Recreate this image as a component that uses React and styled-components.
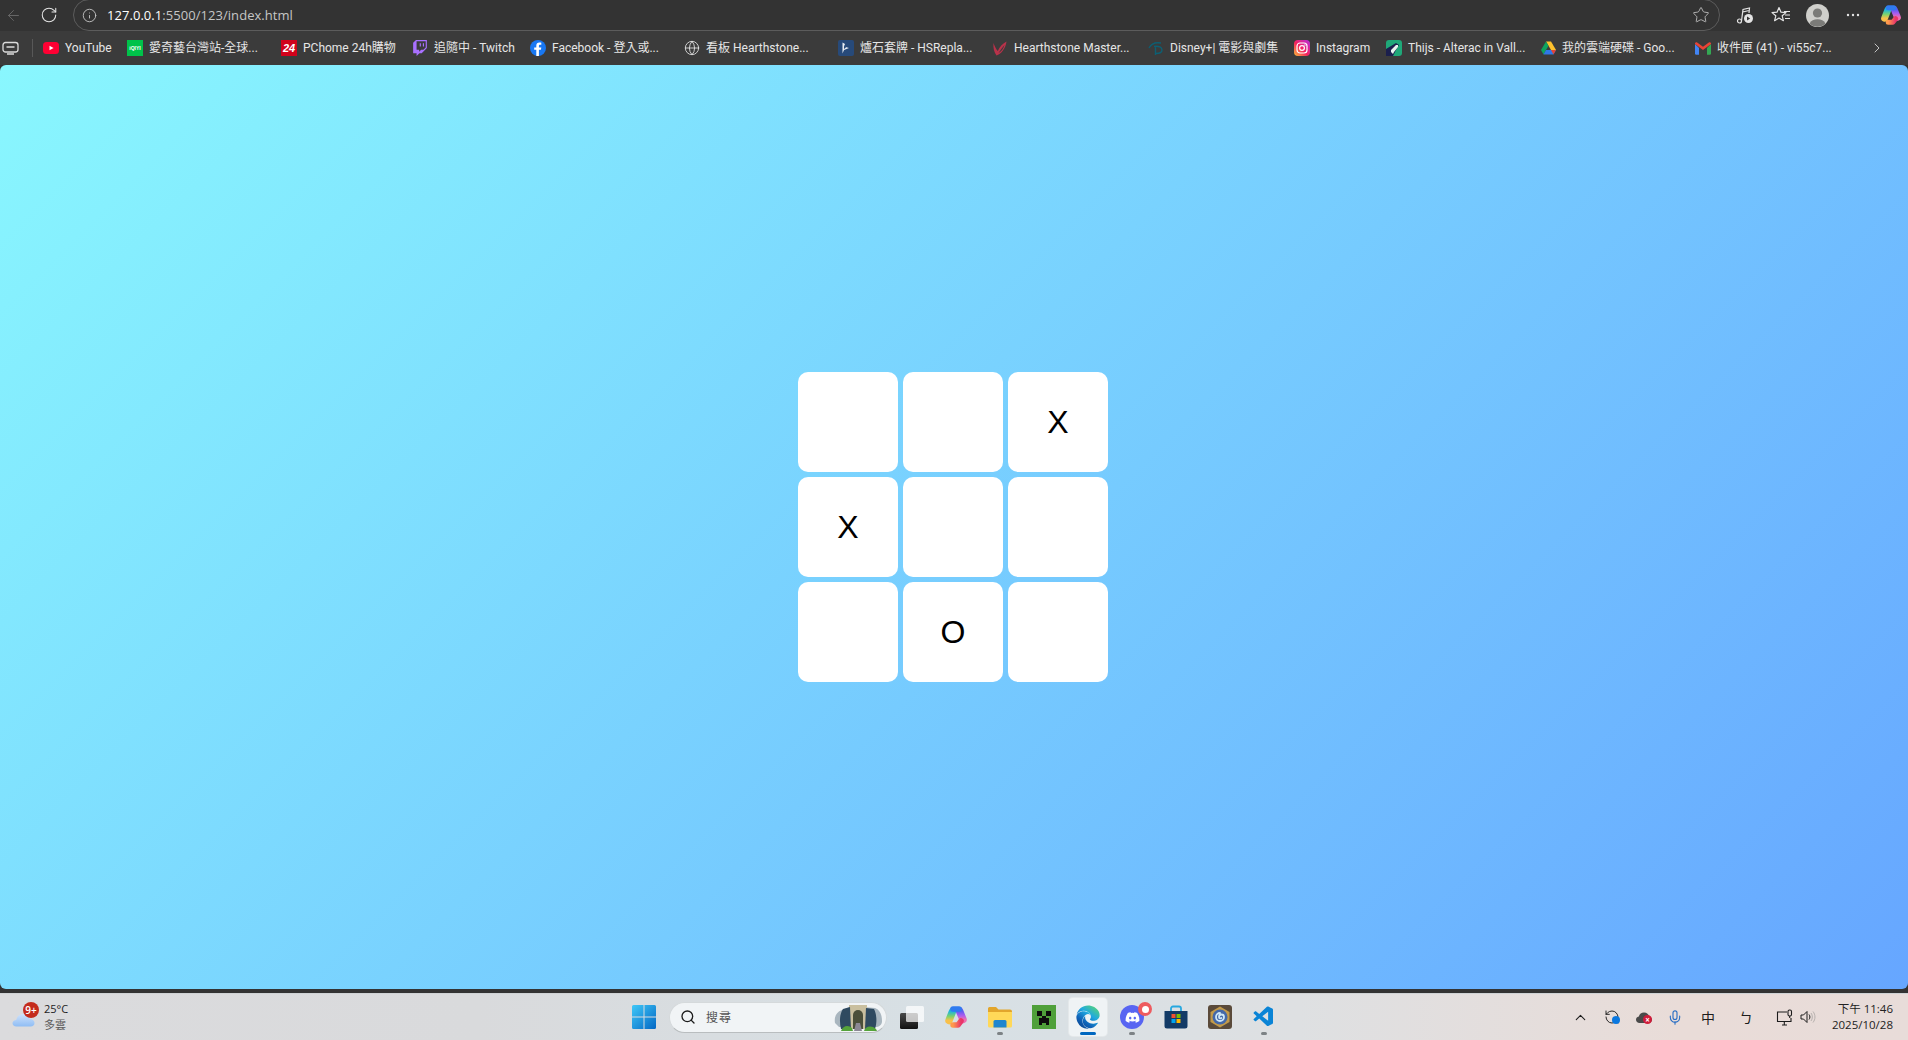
import React from "react";
import styled, { createGlobalStyle } from "styled-components";
import { ArrowLeft, RotateCw, Info, Star, ChevronRight, ChevronUp, Globe, Mic, RefreshCcw, Search } from "lucide-react";
import { FaDiscord, FaEdge } from "react-icons/fa";
import { SiTwitch } from "react-icons/si";
import { VscVscode } from "react-icons/vsc";

const UI = `"Open Sans", "Noto Sans", "Noto Sans CJK TC", sans-serif`;

const Global = createGlobalStyle`
  html, body { margin: 0; padding: 0; height: 100%; overflow: hidden; background: #333; }
  #root { height: 100%; }
  * { box-sizing: border-box; }
`;

const Shell = styled.div`
  width: 1908px; height: 1040px; display: flex; flex-direction: column;
  background: #333; font-family: ${UI}; overflow: hidden;
`;
const TopRow = styled.div`
  height: 31px; flex: none; display: flex; align-items: flex-start; background: #333;
`;
const Slot = styled.div`
  flex: none; display: flex; align-items: center; justify-content: center;
  width: ${p => p.$w || 36}px; height: 30px; color: ${p => p.$c || "#e4e4e4"};
  margin-left: ${p => p.$ml || 0}px;
`;
const UrlField = styled.div`
  flex: none; width: 1647px; height: 32px; margin: -1px 0 0 1px; display: flex; align-items: center;
  border: 1px solid #5c5c5c; border-radius: 16px;
`;
const UrlText = styled.div`
  flex: 1; margin-left: 3px; font-size: 13px; letter-spacing: 0.05px; color: #c6c6c6; white-space: nowrap;
  b { font-weight: 400; color: #fff; }
`;
const BookRow = styled.div`
  height: 34px; flex: none; display: flex; align-items: center; background: #3b3b3b;
`;
const PillSlot = styled.div`
  flex: none; width: 22px; margin-right: 10px; display: flex; justify-content: flex-end; padding-right: 3px;
`;
const Divider = styled.div`
  flex: none; width: 1px; height: 18px; background: #585858; margin-right: 10px;
`;
const Bookmark = styled.div`
  flex: none; width: ${p => p.$w}px; display: flex; align-items: center; gap: 6px;
  font-family: Roboto, "Noto Sans CJK TC", sans-serif; font-size: 12px; line-height: 16px; color: #e6e6e6; white-space: nowrap; overflow: hidden;
  svg { flex: none; }
`;
const BookChevron = styled.div`
  flex: none; color: #cfcfcf; display: flex;
`;
const Main = styled.main`
  flex: 1; display: flex; align-items: center; justify-content: center; padding-right: 2px;
  background: linear-gradient(135deg, #89f7fe 0%, #66a6ff 100%);
  border-radius: 6px;
`;
const Board = styled.div`
  display: grid; grid-template-columns: repeat(3, 100px); grid-template-rows: repeat(3, 100px); gap: 5px;
`;
const Cell = styled.div`
  background: #fff; border-radius: 10px; display: flex; align-items: center; justify-content: center;
  font-family: "Liberation Sans", Arial, sans-serif; font-size: 32px; color: #000;
`;
const BottomStrip = styled.div`
  height: 4px; flex: none; background: #333;
`;
const Taskbar = styled.footer`
  height: 47px; flex: none; display: grid; grid-template-columns: 622px auto 1fr; align-items: center;
  background: linear-gradient(90deg, #dbdbdd 0%, #d9dadc 25%, #d7e0e5 50%, #dee0e2 68%, #e9dcd8 88%, #e8dcd9 100%);
  border-top: 1px solid #cfd2d4;
`;
const Weather = styled.div`
  display: flex; align-items: center; gap: 9px; padding-left: 12px; height: 100%;
`;
const WeatherIcon = styled.div`
  position: relative; width: 23px; height: 16px; margin-top: 2px;
`;
const Badge = styled.span`
  position: absolute; left: 11px; top: -8px; width: 16px; height: 16px; border-radius: 50%;
  background: #c42b1c; color: #fff; font-size: 10px; line-height: 16px; text-align: center; font-weight: 600;
`;
const WeatherText = styled.div`
  font-size: 11px; line-height: 16px; color: #1d1d1d;
  span { display: block; color: #5a5a5a; }
`;
const Center = styled.div`
  display: flex; align-items: center;
`;
const TaskSlot = styled.div`
  position: relative; flex: none; width: 44px; height: 38px; display: flex; align-items: center; justify-content: center;
  border-radius: 4px;
  ${p => p.$active && `
    &::before { content: ""; position: absolute; left: 3px; right: 3px; top: 0; bottom: 0; border-radius: 4px; background: #eff3f5; box-shadow: 0 0 0 1px #e4e8ea; }
    &::after { content: ""; position: absolute; left: 14px; width: 16px; bottom: 1px; height: 3px; border-radius: 2px; background: #0067c0; }
  `}
  ${p => p.$running && `
    &::after { content: ""; position: absolute; left: 19px; width: 6px; bottom: 1px; height: 3px; border-radius: 2px; background: #7d8285; }
  `}
  svg { position: relative; }
`;
const DiscordDisc = styled.div`
  width: 24px; height: 24px; border-radius: 50%; background: #5865f2; display: flex; align-items: center; justify-content: center; color: #fff;
`;
const NotifyDot = styled.span`
  position: absolute; left: 28px; top: 4px; width: 14px; height: 14px; border-radius: 50%;
  background: #ee5b5f; padding: 3.5px;
  &::after { content: ""; display: block; width: 7px; height: 7px; border-radius: 50%; background: #fff; }
`;
const SearchBox = styled.div`
  flex: none; width: 218px; height: 31px; margin: 0 3px; border-radius: 16px; display: flex; align-items: center;
  background: #f1f4f6; border: 1px solid #d5d9db; border-bottom-color: #b9bdbf; padding-left: 10px; color: #1c1c1c;
`;
const SearchLabel = styled.span`
  font-size: 12px; color: #555; margin-left: 10px; flex: 1; letter-spacing: 1px;
`;
const Tray = styled.div`
  display: flex; align-items: center; color: #1c1c1c; height: 100%; width: 100%;
`;
const TraySlot = styled.div`
  position: relative; flex: none; width: ${p => p.$w}px; margin-left: ${p => p.$ml || 0}px; display: flex; align-items: center; justify-content: center;
  font-size: 14px;
  color: ${p => p.$c || "#1c1c1c"};
`;
const TrayDot = styled.span`
  position: absolute; left: ${p => p.$l}px; top: ${p => p.$t}px; width: ${p => p.$s}px; height: ${p => p.$s}px; border-radius: 50%;
  background: ${p => p.$c}; color: #fff; font-size: 8px; line-height: ${p => p.$s}px; text-align: center; font-weight: 700;
`;
const Clock = styled.div`
  margin-left: auto; padding-right: 15px; text-align: right; font-size: 11.5px; line-height: 16px; color: #222; white-space: nowrap;
`;
const EdgeWrap = styled.div`
  position: relative; display: flex; color: #1f8fd8;
  svg path { fill: url(#edgeGrad); }
`;
const HiddenDefs = styled.svg`
  position: absolute; width: 0; height: 0;
`;
const BingSvg = styled.svg`
  margin-right: 3px; flex: none;
`;

/* ---------- drawn icons ---------- */
const TabPill = () => (
  <svg width="17" height="14" viewBox="0 0 17 14" fill="none" stroke="#dcdcdc" strokeWidth="1.3">
    <rect x="1" y="1.5" width="15" height="9.5" rx="2.5" />
    <path d="M4.5 6h8M5 13h7" />
  </svg>
);
const YT = () => (
  <svg width="16" height="16" viewBox="0 0 16 16"><rect y="2" width="16" height="12" rx="3.5" fill="#ff0033" /><path d="M6.5 5.8 10.6 8l-4.1 2.2z" fill="#fff" /></svg>
);
const IQ = () => (
  <svg width="16" height="16" viewBox="0 0 16 16"><rect width="16" height="16" fill="#00c24a" /><text x="8" y="10" fontSize="5" fontWeight="700" textAnchor="middle" fill="#fff" fontFamily="Liberation Sans">iQIYI</text></svg>
);
const PC = () => (
  <svg width="16" height="16" viewBox="0 0 16 16"><rect width="16" height="16" fill="#d0021b" /><text x="8" y="12" fontSize="11" fontWeight="700" fontStyle="italic" textAnchor="middle" fill="#fff" fontFamily="Liberation Sans">24</text></svg>
);
const Twitch = () => <SiTwitch size={16} color="#a970ff" />;
const FB = () => (
  <svg width="16" height="16" viewBox="0 0 16 16"><circle cx="8" cy="8" r="8" fill="#1877f2" /><path d="M8.9 16V9.8h2l.4-2.4H8.9V6c0-.7.3-1.2 1.3-1.2h1.1V2.7c-.5-.1-1.2-.2-1.9-.2-1.9 0-3.1 1.1-3.1 3.2v1.7H4.2v2.4h2.1V16z" fill="#fff" /></svg>
);
const HS = () => (
  <svg width="16" height="16" viewBox="0 0 16 16"><rect width="16" height="16" rx="2" fill="#274a7a" /><path d="M4.5 2.5v11l1.5-3.5 5-2L6 6.5 7 4z" fill="#e8edf3" /><path d="M6 5.5 8 7.5 6 9z" fill="#274a7a" /></svg>
);
const HM = () => (
  <svg width="16" height="16" viewBox="0 0 16 16"><path d="M1.500 3c-.5 5 .5 9 3 12.500 4.500-1.500 9-6.500 10-14C11 3.500 7.500 6.500 5.800 11 4 9 2.800 6.500 1.500 3z" fill="#b8324a" /><path d="M6.500 13C8.500 10 10.500 7.500 12.500 5 11.500 8.500 9.500 11.500 6.500 13z" fill="#3b3b3b" /></svg>
);
const Disney = () => (
  <svg width="16" height="16" viewBox="0 0 16 16" fill="none" stroke="#0d5f73" strokeWidth="1.4"><path d="M1 8c2-4 6-6 12-5" /><path d="M6 6.5c5-1 8 1 8 3.500s-3 3.500-6 3.500M7.500 7v8" /></svg>
);
const IG = () => (
  <svg width="16" height="16" viewBox="0 0 16 16" fill="none">
    <defs><linearGradient id="ig" x1="0" y1="1" x2="1" y2="0"><stop offset="0" stopColor="#fdc13a" /><stop offset=".45" stopColor="#f5225c" /><stop offset="1" stopColor="#b62ee0" /></linearGradient></defs>
    <rect width="16" height="16" rx="4" fill="url(#ig)" />
    <rect x="3" y="3" width="10" height="10" rx="3" stroke="#fff" strokeWidth="1.2" />
    <circle cx="8" cy="8" r="2.4" stroke="#fff" strokeWidth="1.2" /><circle cx="11" cy="5" r=".7" fill="#fff" />
  </svg>
);
const Thijs = () => (
  <svg width="16" height="16" viewBox="0 0 16 16"><rect width="16" height="16" rx="3" fill="#1fa879" /><path d="M0 16V9l5-3 5-3 3 2-3 5-3 6z" fill="#1b1f4d" /><path d="M5 10l5-5h2v2l-4 5-1 2-2-2z" fill="#e8f4ef" /></svg>
);
const Drive = () => (
  <svg width="15" height="14" viewBox="0 0 15 14"><path d="M5 .5h5l5 8.500h-5z" fill="#fdc12d" /><path d="M5 .5 7.500 4.800 2.500 13.500 0 9z" fill="#0fa35e" /><path d="M5 9h10l-2.500 4.500h-10z" fill="#2f78e8" /><path d="M10 9h5l-2.500 4.500z" fill="#e64435" /></svg>
);
const Gmail = () => (
  <svg width="16" height="13" viewBox="0 0 16 13"><path d="M0 2v9.500A1.200 1.200 0 0 0 1.200 12.700H4V6z" fill="#4285f4" /><path d="M12 6v6.700h2.800A1.200 1.200 0 0 0 16 11.500V2z" fill="#34a853" /><path d="M0 2 8 8l8-6V1.600C16 .4 14.700-.2 13.800.4L8 4.800 2.200.4C1.300-.2 0 .4 0 1.600z" fill="#ea4335" /></svg>
);
const Copilot = ({ size = 22, id = "c" }) => (
  <svg width={size} height={size} viewBox="0 0 24 24" fill="none" strokeLinecap="round" strokeWidth="7.5">
    <defs>
      <linearGradient id={`${id}a`} x1="0" y1="0" x2="0" y2="1"><stop offset="0" stopColor="#1fb5d8" /><stop offset=".55" stopColor="#7fd36a" /><stop offset="1" stopColor="#f8c04a" /></linearGradient>
      <linearGradient id={`${id}b`} x1="0" y1="0" x2="0" y2="1"><stop offset="0" stopColor="#5a5cf0" /><stop offset=".5" stopColor="#a85cf0" /><stop offset="1" stopColor="#ee6fb0" /></linearGradient>
      <linearGradient id={`${id}c`} x1="0" y1="0" x2="1" y2="0"><stop offset="0" stopColor="#ff9a4c" /><stop offset="1" stopColor="#e8356a" /></linearGradient>
    </defs>
    <path d="M8.500 6.500 5 15.500" stroke={`url(#${id}a)`} />
    <path d="M15.500 6 19 14.500" stroke={`url(#${id}b)`} />
    <path d="M9 4h6" stroke="#2f7bf0" strokeWidth="5.500" />
    <path d="M9 20h5l3-4" stroke={`url(#${id}c)`} strokeWidth="5.500" strokeLinejoin="round" />
  </svg>
);
const MusicQueue = () => (
  <svg width="18" height="18" viewBox="0 0 18 18" fill="none" stroke="#e4e4e4" strokeWidth="1.2">
    <circle cx="3.500" cy="15" r="2" /><path d="M5.500 15 7 3.500 13.500 2 13 7M6.800 6l6.200-1.500" />
    <circle cx="12.500" cy="12.500" r="4.500" fill="#e4e4e4" stroke="none" /><path d="M11 10.500v4l3.200-2z" fill="#333" stroke="none" />
  </svg>
);
const FavList = () => (
  <svg width="20" height="18" viewBox="0 0 20 18" fill="none" stroke="#e4e4e4" strokeWidth="1.2" strokeLinejoin="round">
    <path d="M8 1.500 10 6.200l5 .4-3.800 3.200 1.200 4.900L8 12.100l-4.400 2.600 1.200-4.900L1 6.600l5-.4z" />
    <path d="M13 5.500h6M14 9h5M14 12.500h5" />
  </svg>
);
const Avatar = () => (
  <svg width="23" height="23" viewBox="0 0 23 23"><circle cx="11.500" cy="11.500" r="11.500" fill="#cfcfcb" /><circle cx="11.500" cy="9" r="4.600" fill="#7b7b78" /><path d="M3.500 19.500c1.500-3 4.500-4.200 8-4.200s6.500 1.200 8 4.200a11.500 11.500 0 0 1-16 0z" fill="#7b7b78" /></svg>
);
const Dots = () => (
  <svg width="14" height="4" viewBox="0 0 14 4" fill="#e4e4e4"><circle cx="2" cy="2" r="1.200" /><circle cx="7" cy="2" r="1.200" /><circle cx="12" cy="2" r="1.200" /></svg>
);
const CloudIcon = () => (
  <svg width="23" height="16" viewBox="0 0 23 16"><defs><linearGradient id="cl" x1="0" y1="0" x2="0" y2="1"><stop offset="0" stopColor="#cfe2fb" /><stop offset="1" stopColor="#8fbdf4" /></linearGradient></defs><path d="M4.500 15.500C2 15.500.5 14 .5 12.300c0-2 1.700-3.300 3.700-3.300C5 5 8 3 11 3c3.500 0 6 2 6.700 5 2.500 0 4.800 1.600 4.800 4 0 2-1.500 3.500-3.800 3.500z" fill="url(#cl)" /></svg>
);
const WinLogo = () => (
  <svg width="24" height="24" viewBox="0 0 24 24"><defs><linearGradient id="w" x1="0" y1="0" x2="1" y2="1"><stop offset="0" stopColor="#3fc8f8" /><stop offset="1" stopColor="#0367c4" /></linearGradient></defs><path d="M0 1.500A1.500 1.500 0 0 1 1.500 0h10v11.500H0zM12.500 0h10A1.500 1.500 0 0 1 24 1.500v10H12.500zM0 12.500h11.500V24h-10A1.500 1.500 0 0 1 0 22.500zM12.500 12.500H24v10a1.500 1.500 0 0 1-1.500 1.500h-10z" fill="url(#w)" /></svg>
);
const BingPic = () => (
  <BingSvg width="50" height="28" viewBox="0 0 50 28">
    <path d="M2 20C1 14 3 9 9 7l8-3 3 20H6z" fill="#a9b6bf" />
    <path d="M30 4l12 1c5 2 7 7 7 13 0 4-3 6-7 6H30z" fill="#a9b6bf" />
    <rect x="16" y="2" width="18" height="24" fill="#c9bf9f" />
    <path d="M20 26V12a5 5 0 0 1 10 0v14z" fill="#4b4f3a" />
    <path d="M10 6l7-2 1 22H8C6 18 7 10 10 6z" fill="#2f4a60" />
    <path d="M33 5l8 1c3 6 3 14 1 20H32z" fill="#2f4a60" />
    <path d="M8 28c2-6 8-6 11-3l1 3zM31 28c1-5 8-6 12-2l1 2z" fill="#55a33a" />
    <path d="M21 28l2-8h4l2 8z" fill="#8b8794" />
  </BingSvg>
);
const TaskView = () => (
  <svg width="24" height="23" viewBox="0 0 24 23"><defs><linearGradient id="tv" x1="0" y1="0" x2="0" y2="1"><stop offset="0" stopColor="#4a4a4a" /><stop offset="1" stopColor="#111" /></linearGradient></defs><rect x="0" y="7" width="18" height="16" rx="1.500" fill="url(#tv)" /><rect x="6" y="0" width="18" height="16" rx="1.500" fill="#fff" fillOpacity=".72" /></svg>
);
const Folder = () => (
  <svg width="24" height="24" viewBox="0 0 24 24"><path d="M0 3.500A1.500 1.500 0 0 1 1.500 2h6.500l2.500 2.500H22A2 2 0 0 1 24 6.500V9H0z" fill="#e2a52b" /><path d="M0 7h24v14a1.500 1.500 0 0 1-1.500 1.500h-21A1.500 1.500 0 0 1 0 21z" fill="#ffd858" /><path d="M7 15h10a1.500 1.500 0 0 1 1.500 1.500v6h-13v-6A1.500 1.500 0 0 1 7 15z" fill="#1f86cf" /></svg>
);
const Creeper = () => (
  <svg width="24" height="24" viewBox="0 0 24 24"><rect width="24" height="24" fill="#4fa03a" /><path d="M5 6h5v5H5zM14 6h5v5h-5zM10 11h4v2h3v7h-3v-2h-4v2H7v-7h3z" fill="#0d0d0d" /></svg>
);
const Edge = () => (
  <EdgeWrap>
    <HiddenDefs>
      <defs><linearGradient id="edgeGrad" x1=".85" y1=".05" x2=".2" y2=".95"><stop offset="0" stopColor="#52d27f" /><stop offset=".4" stopColor="#1fa8e0" /><stop offset=".75" stopColor="#0f62b8" /><stop offset="1" stopColor="#0b4a96" /></linearGradient></defs>
    </HiddenDefs>
    <FaEdge size={24} />
  </EdgeWrap>
);
const Store = () => (
  <svg width="24" height="24" viewBox="0 0 24 24" fill="none"><path d="M7 6V3.500A2 2 0 0 1 9 1.500h6a2 2 0 0 1 2 2V6" stroke="#27a8e0" strokeWidth="1.800" /><path d="M.5 6h23v15a2.500 2.500 0 0 1-2.500 2.500H3A2.500 2.500 0 0 1 .5 21z" fill="#123a66" /><rect x="7.500" y="9" width="4" height="4" fill="#f05032" /><rect x="12.500" y="9" width="4" height="4" fill="#7fba00" /><rect x="7.500" y="14" width="4" height="4" fill="#00a4ef" /><rect x="12.500" y="14" width="4" height="4" fill="#ffb900" /></svg>
);
const Hearthstone = () => (
  <svg width="24" height="24" viewBox="0 0 24 24" fill="none"><rect width="24" height="24" rx="3" fill="#5a4a3a" /><path d="M12 1.500 21.500 7v10L12 22.500 2.500 17V7z" fill="#c29a4a" /><circle cx="12" cy="12" r="7.500" fill="#4468a8" /><path d="M12 8a4 4 0 1 0 4 4c0-1.500-1-2.500-2.500-2.500S11 10.500 11 12s1.500 1.800 2.300 1" stroke="#cfe7f7" strokeWidth="1.800" strokeLinecap="round" /></svg>
);
const OneDrive = () => (
  <svg width="16" height="11" viewBox="0 0 16 11"><path d="M3.500 11C1.500 11 0 9.500 0 7.700 0 6 1.200 4.800 2.800 4.500 3.500 2 5.500.5 8 .5c2.800 0 4.800 1.800 5.200 4.300 1.600.2 2.800 1.400 2.800 3 0 1.800-1.500 3.200-3.500 3.200z" fill="#4a4a4a" /></svg>
);
const Speaker = () => (
  <svg width="17" height="14" viewBox="0 0 17 14" fill="none" stroke="#1c1c1c" strokeWidth="1"><path d="M1 5h2.500L7 1.500v11L3.500 9H1z" /><path d="M9 4.500c1.200 1.500 1.200 3.500 0 5" /><path d="M11 3c1.800 2.300 1.800 5.700 0 8M13 1.500c2.600 3.300 2.600 7.700 0 11" stroke="#b5b0ad" /></svg>
);
const NetLan = () => (
  <svg width="17" height="17" viewBox="0 0 17 17" fill="none" stroke="#1c1c1c" strokeWidth="1.100"><path d="M11 3H1.500v9.500H15V9" /><path d="M6 16h5M8.300 12.500V16" /><rect x="12" y="1" width="3.500" height="6" rx="1.500" /><path d="M13.700 7v2" /></svg>
);

const books = [
  [84, <YT />, "YouTube"], [154, <IQ />, "愛奇藝台灣站-全球..."], [131, <PC />, "PChome 24h購物"],
  [118, <Twitch />, "追隨中 - Twitch"], [154, <FB />, "Facebook - 登入或..."],
  [154, <Globe size={16} strokeWidth={1.3} color="#e4e4e4" />, "看板 Hearthstone..."],
  [154, <HS />, "爐石套牌 - HSRepla..."], [156, <HM />, "Hearthstone Master..."],
  [146, <Disney />, "Disney+| 電影與劇集"], [92, <IG />, "Instagram"], [155, <Thijs />, "Thijs - Alterac in Vall..."],
  [154, <Drive />, "我的雲端硬碟 - Goo..."], [174, <Gmail />, "收件匣 (41) - vi55c7..."],
];

const board = ["", "", "X", "X", "", "", "", "O", ""];

export default function App() {
  return (
    <Shell>
      <Global />
      <TopRow>
        <Slot $w={26} $c="#6b6b6b"><ArrowLeft size={17} strokeWidth={1.3} /></Slot>
        <Slot $w={46}><RotateCw size={18} strokeWidth={1.4} /></Slot>
        <UrlField>
          <Slot $w={30} $c="#c9c9c9"><Info size={15} strokeWidth={1.4} /></Slot>
          <UrlText><b>127.0.0.1</b>:5500/123/index.html</UrlText>
          <Slot $w={36} $c="#bdbdbd"><Star size={18} strokeWidth={1.2} /></Slot>
        </UrlField>
        <Slot $ml={7}><MusicQueue /></Slot>
        <Slot><FavList /></Slot>
        <Slot><Avatar /></Slot>
        <Slot><Dots /></Slot>
        <Slot $w={35} $ml={2}><Copilot id="top" /></Slot>
      </TopRow>
      <BookRow>
        <PillSlot><TabPill /></PillSlot>
        <Divider />
        {books.map(([w, icon, label]) => (
          <Bookmark key={label} $w={w}>{icon}<span>{label}</span></Bookmark>
        ))}
        <BookChevron><ChevronRight size={16} strokeWidth={1.4} /></BookChevron>
      </BookRow>
      <Main>
        <Board>
          {board.map((v, i) => <Cell key={i}>{v}</Cell>)}
        </Board>
      </Main>
      <BottomStrip />
      <Taskbar>
        <Weather>
          <WeatherIcon><CloudIcon /><Badge>9+</Badge></WeatherIcon>
          <WeatherText>25°C<span>多雲</span></WeatherText>
        </Weather>
        <Center>
          <TaskSlot><WinLogo /></TaskSlot>
          <SearchBox>
            <Search size={16} strokeWidth={2} />
            <SearchLabel>搜尋</SearchLabel>
            <BingPic />
          </SearchBox>
          <TaskSlot><TaskView /></TaskSlot>
          <TaskSlot><Copilot size={24} id="bar" /></TaskSlot>
          <TaskSlot $running><Folder /></TaskSlot>
          <TaskSlot><Creeper /></TaskSlot>
          <TaskSlot $active><Edge /></TaskSlot>
          <TaskSlot $running>
            <DiscordDisc><FaDiscord size={15} /></DiscordDisc>
            <NotifyDot />
          </TaskSlot>
          <TaskSlot><Store /></TaskSlot>
          <TaskSlot><Hearthstone /></TaskSlot>
          <TaskSlot $running><VscVscode size={24} color="#0a84d6" /></TaskSlot>
        </Center>
        <Tray>
          <TraySlot $w={24} $ml={282}><ChevronUp size={17} strokeWidth={1.5} /></TraySlot>
          <TraySlot $w={32} $ml={4}>
            <RefreshCcw size={16} strokeWidth={1.4} />
            <TrayDot $l={16} $t={7} $s={8} $c="#0a78e0" />
          </TraySlot>
          <TraySlot $w={16} $ml={8}>
            <OneDrive />
            <TrayDot $l={7} $t={3} $s={9} $c="#d01c3a">×</TrayDot>
          </TraySlot>
          <TraySlot $w={16} $ml={15} $c="#2a6fc4"><Mic size={17} strokeWidth={1.7} /></TraySlot>
          <TraySlot $w={18} $ml={16}>中</TraySlot>
          <TraySlot $w={14} $ml={22}>ㄅ</TraySlot>
          <TraySlot $w={17} $ml={23}><NetLan /></TraySlot>
          <TraySlot $w={17} $ml={7}><Speaker /></TraySlot>
          <Clock>下午 11:46<br />2025/10/28</Clock>
        </Tray>
      </Taskbar>
    </Shell>
  );
}
